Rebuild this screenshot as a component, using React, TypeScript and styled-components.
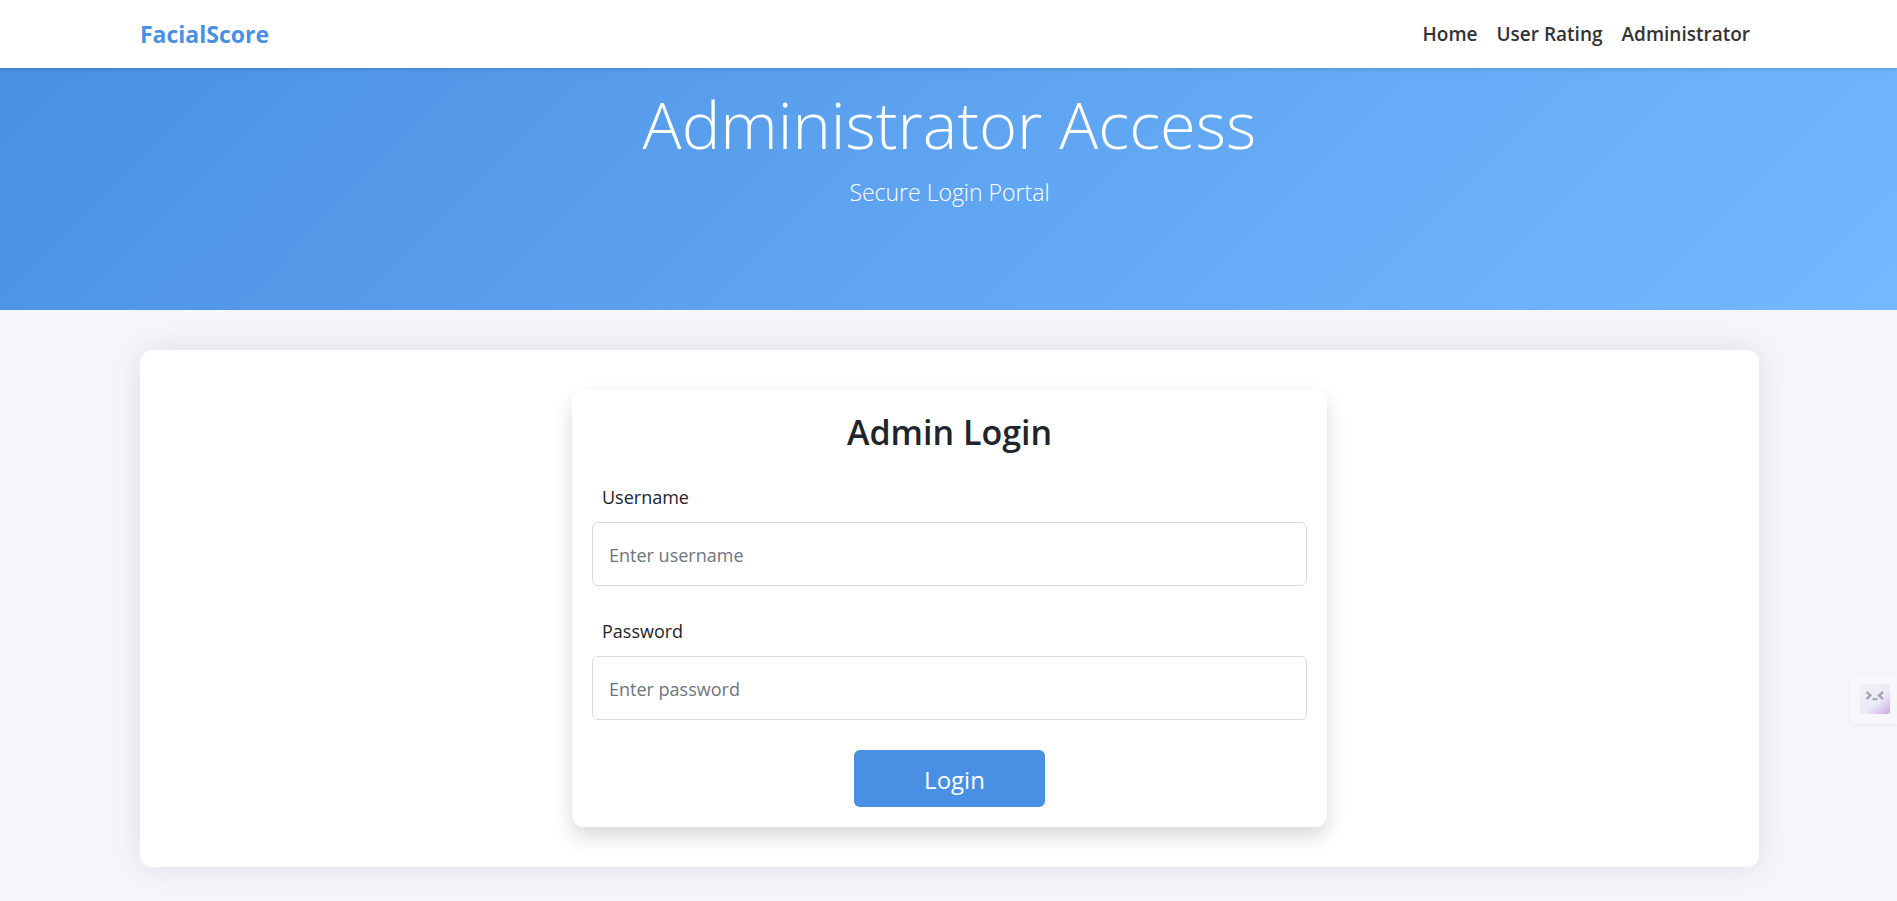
import React from "react";
import styled, { createGlobalStyle } from "styled-components";

const GlobalStyle = createGlobalStyle`
  *, *::before, *::after { box-sizing: border-box; }
  body {
    margin: 0;
    background: #f4f6fb;
    color: #212529;
    font-family: "Segoe UI", "Open Sans", "Noto Sans", sans-serif;
    font-size: 18px;
    line-height: 30px;
  }
`;

const Page = styled.div`
  min-height: 100vh;
  overflow-x: hidden;
`;

const Header = styled.header`
  position: relative;
  z-index: 1;
  display: flex;
  align-items: center;
  justify-content: space-between;
  height: 68px;
  padding: 0 147px 0 140px;
  background: #fff;
  box-shadow: 0 2px 4px rgba(0, 0, 0, 0.1);
`;

const Brand = styled.a`
  color: #4a90e2;
  font-size: 23px;
  font-weight: 700;
  text-decoration: none;
`;

const Nav = styled.nav`
  display: flex;
  gap: 19px;
`;

const NavLink = styled.a`
  color: #333;
  font-size: 19px;
  font-weight: 600;
  text-decoration: none;
`;

const Hero = styled.section`
  height: 242px;
  padding: 14px 0 0 2px;
  text-align: center;
  color: #fff;
  background: linear-gradient(135deg, #4a90e2, #74b9ff);
`;

const HeroTitle = styled.h1`
  margin: 0;
  font-size: 65px;
  font-weight: 300;
  line-height: 84px;
`;

const HeroText = styled.p`
  margin: 11px 0 0;
  font-size: 23px;
  font-weight: 300;
`;

const Panel = styled.main`
  display: flex;
  justify-content: center;
  margin: 40px 138px 34px 140px;
  padding: 40px 20px;
  border-radius: 12px;
  background: #fff;
  box-shadow: 0 0 32px rgba(0, 0, 0, 0.1);
`;

const LoginForm = styled.form`
  display: flex;
  flex-direction: column;
  flex: 0 1 755px;
  padding: 20px;
  border-radius: 12px;
  background: #fff;
  box-shadow: 0 10px 20px rgba(0, 0, 0, 0.15);
`;

const FormTitle = styled.h2`
  margin: 0 0 28px;
  font-size: 34px;
  font-weight: 600;
  line-height: 44px;
  text-align: center;
`;

const Field = styled.div`
  display: flex;
  flex-direction: column;
  gap: 10px;
  margin-bottom: 30px;
`;

const Label = styled.label`
  padding-left: 10px;
`;

const Input = styled.input`
  width: 100%;
  height: 64px;
  padding: 2px 16px 0;
  border: 1px solid #d9dcdf;
  border-radius: 6px;
  background: #fff;
  color: #212529;
  font: inherit;
  &::placeholder { color: #6c757d; opacity: 1; }
`;

const SubmitButton = styled.button`
  align-self: center;
  width: 191px;
  height: 57px;
  padding: 2px 0 0 10px;
  border: 0;
  border-radius: 6px;
  background: #4a90e2;
  color: #fff;
  font: inherit;
  font-size: 24px;
  cursor: pointer;
`;

const AssistantTab = styled.button`
  position: fixed;
  right: 0;
  top: 674px;
  display: flex;
  align-items: center;
  width: 47px;
  height: 50px;
  padding: 0 0 0 10px;
  border: 0;
  border-radius: 8px 0 0 8px;
  background: #f6f7fb;
  box-shadow: 0 1px 4px rgba(0, 0, 0, 0.05);
`;

function FaceIcon() {
  return (
    <svg width="30" height="30" viewBox="0 0 30 30" fill="none" aria-hidden="true">
      <defs>
        <linearGradient id="face" x1="4" y1="2" x2="30" y2="30" gradientUnits="userSpaceOnUse">
          <stop offset="0" stopColor="#eef1f5" />
          <stop offset="0.55" stopColor="#ebeaf5" />
          <stop offset="1" stopColor="#cba9e6" />
        </linearGradient>
      </defs>
      <rect width="30" height="30" rx="3" fill="url(#face)" />
      <path d="M6.500 8l4 3.500-4 3.500M23 8l-4 3.500 4 3.500" stroke="#a5a8b1" strokeWidth="2.400" />
      <path d="M12.800 14.300q2.200 2.400 4.400 0" stroke="#a5a8b1" strokeWidth="2.200" />
    </svg>
  );
}

export default function App() {
  return (
    <Page>
      <GlobalStyle />
      <Header>
        <Brand href="#">FacialScore</Brand>
        <Nav>
          <NavLink href="#home">Home</NavLink>
          <NavLink href="#rating">User Rating</NavLink>
          <NavLink href="#admin">Administrator</NavLink>
        </Nav>
      </Header>
      <Hero>
        <HeroTitle>Administrator Access</HeroTitle>
        <HeroText>Secure Login Portal</HeroText>
      </Hero>
      <Panel>
        <LoginForm onSubmit={(e: React.FormEvent) => e.preventDefault()}>
          <FormTitle>Admin Login</FormTitle>
          <Field>
            <Label htmlFor="username">Username</Label>
            <Input id="username" type="text" placeholder="Enter username" />
          </Field>
          <Field>
            <Label htmlFor="password">Password</Label>
            <Input id="password" type="password" placeholder="Enter password" />
          </Field>
          <SubmitButton type="submit">Login</SubmitButton>
        </LoginForm>
      </Panel>
      <AssistantTab type="button" aria-label="Assistant">
        <FaceIcon />
      </AssistantTab>
    </Page>
  );
}
